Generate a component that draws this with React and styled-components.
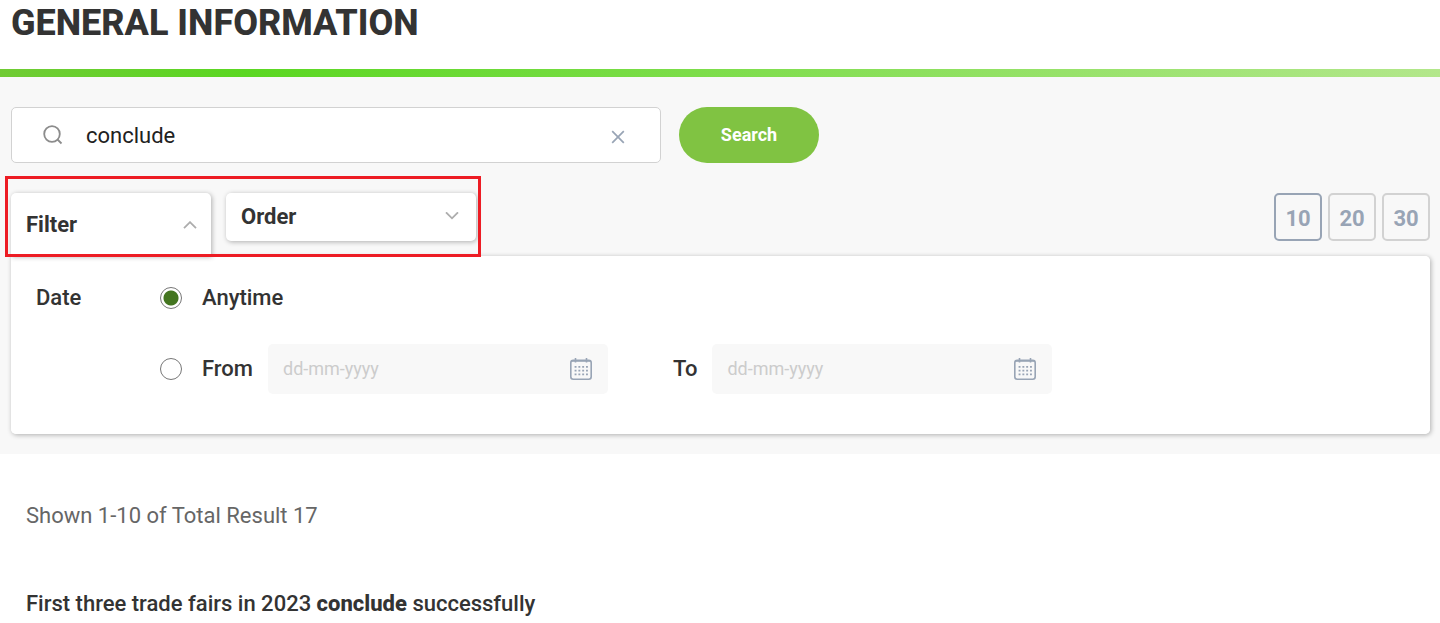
import React, { useState } from 'react';
import styled, { createGlobalStyle, css } from 'styled-components';

const App = () => {
    const [query, setQuery] = useState('conclude');
    const [perPage, setPerPage] = useState(10);
    const [range, setRange] = useState('anytime');

    return (
        <>
            <GlobalStyle />
            <Header>
                <h1>GENERAL INFORMATION</h1>
            </Header>
            <Stripe />
            <SearchArea>
                <SearchForm onSubmit={(e) => e.preventDefault()}>
                    <SearchBox>
                        <SearchIcon />
                        <input
                            type="text"
                            aria-label="Search"
                            value={query}
                            onChange={(e) => setQuery(e.target.value)}
                        />
                        <IconButton type="button" aria-label="Clear" onClick={() => setQuery('')}>
                            <ClearIcon />
                        </IconButton>
                    </SearchBox>
                    <SearchButton type="submit">Search</SearchButton>
                </SearchForm>

                <Toolbar>
                    <Tabs>
                        <Tab type="button" $open aria-expanded="true">
                            Filter
                            <Chevron up />
                        </Tab>
                        <Tab type="button" aria-expanded="false">
                            Order
                            <Chevron />
                        </Tab>
                        <Highlight />
                    </Tabs>
                    <PageSizes>
                        {PAGE_SIZES.map((size) => (
                            <PageSize
                                key={size}
                                type="button"
                                $active={size === perPage}
                                onClick={() => setPerPage(size)}
                            >
                                {size}
                            </PageSize>
                        ))}
                    </PageSizes>
                </Toolbar>

                <FilterPanel>
                    <legend>Date</legend>
                    <Options>
                        <Option>
                            <RadioLabel>
                                <Radio
                                    name="range"
                                    checked={range === 'anytime'}
                                    onChange={() => setRange('anytime')}
                                />
                                Anytime
                            </RadioLabel>
                        </Option>
                        <Option>
                            <RadioLabel>
                                <Radio
                                    name="range"
                                    checked={range === 'dates'}
                                    onChange={() => setRange('dates')}
                                />
                                From
                            </RadioLabel>
                            <DateField label="From date" />
                            <ToLabel htmlFor="date-to">To</ToLabel>
                            <DateField id="date-to" />
                        </Option>
                    </Options>
                </FilterPanel>
            </SearchArea>

            <Results>
                <p>Shown 1-10 of Total Result 17</p>
                <h2>
                    First three trade fairs in 2023 <strong>conclude</strong> successfully
                </h2>
            </Results>
        </>
    );
};

export default App;

const DateField = ({ id, label }) => (
    <DateBox>
        <input id={id} type="text" aria-label={label} placeholder="dd-mm-yyyy" />
        <IconButton type="button" aria-label="Open calendar">
            <CalendarIcon />
        </IconButton>
    </DateBox>
);

const SearchIcon = () => (
    <svg width="20" height="20" viewBox="0 0 20 20" fill="none" stroke="#8c8c8c" strokeWidth="1.8">
        <circle cx="9" cy="9" r="7.8" />
        <path d="M14.5 14.5L18.5 18.5" />
    </svg>
);

const ClearIcon = () => (
    <svg width="14" height="18" viewBox="0 0 14 18" fill="none" stroke="#98a4b5" strokeWidth="1.7">
        <path d="M1.2 5.2L12.8 16.8M12.8 5.2L1.2 16.8" />
    </svg>
);

const Chevron = ({ up }) => (
    <svg width="14" height="8" viewBox="0 0 14 8" fill="none" stroke="#adadad" strokeWidth="1.8">
        <path d={up ? 'M1 7.2L7 1.2L13 7.2' : 'M1 0.3L7 6.3L13 0.3'} />
    </svg>
);

const CalendarIcon = () => (
    <svg width="24" height="24" viewBox="0 0 24 24" fill="none" stroke="#98a4b5" strokeWidth="1.6">
        <rect x="1.8" y="3.2" width="20.4" height="19" rx="2.5" />
        <path d="M2 4H22" />
        <path d="M6.5 1V5.5M17.5 1V5.5" />
        <path d="M5.6 9.8H19M5.6 13.6H19M5.6 17.4H19" strokeWidth="1.8" strokeDasharray="1.9 1.9" />
    </svg>
);

const GlobalStyle = createGlobalStyle`
    * {
        box-sizing: border-box;
    }
    body {
        margin: 0;
        background: #fff;
        color: #333;
        font-family: Roboto, sans-serif;
        font-size: 22px;
        line-height: 26px;
    }
    button, input {
        font-family: inherit;
    }
    h1, h2, p {
        margin: 0;
    }
`

const Header = styled.header`
    padding: 2px 11px 25px;
    h1 {
        font-size: 36px;
        line-height: 42px;
        font-weight: 800;
    }
`

const Stripe = styled.div`
    height: 8px;
    background: linear-gradient(90deg, #70cb34 0%, #5bd722 17%, #b3e78b 100%);
`

const SearchArea = styled.section`
    padding: 30px 10px 20px 11px;
    background: #f8f8f8;
`

const SearchForm = styled.form`
    display: flex;
    gap: 18px;
    margin-bottom: 30px;
`

const IconButton = styled.button`
    display: flex;
    padding: 0;
    border: 0;
    background: none;
    cursor: pointer;
`

const SearchBox = styled.div`
    display: flex;
    align-items: center;
    flex: 0 1 650px;
    height: 56px;
    padding: 0 35px 0 31px;
    border: 1px solid #d2d2d2;
    border-radius: 5px;
    background: #fff;
    input {
        flex: 1;
        min-width: 0;
        padding: 0 23px;
        border: 0;
        outline: 0;
        background: none;
        color: #212121;
        font-size: 22px;
    }
`

const SearchButton = styled.button`
    width: 140px;
    height: 56px;
    padding: 0 0 2px;
    border: 0;
    border-radius: 28px;
    background: #80c342;
    color: #fff;
    font-size: 18px;
    font-weight: 700;
    cursor: pointer;
`

const Toolbar = styled.div`
    display: flex;
    justify-content: space-between;
    align-items: flex-start;
`

const Tabs = styled.div`
    position: relative;
    display: flex;
    align-items: flex-start;
    gap: 15px;
`

const Tab = styled.button`
    display: flex;
    justify-content: space-between;
    align-items: center;
    width: 250px;
    height: 48px;
    padding: 0 17px 2px 15px;
    border: 0;
    border-radius: 5px;
    background: #fff;
    box-shadow: 1px 1px 5px rgba(0, 0, 0, 0.3);
    color: #333;
    font-size: 22px;
    font-weight: 700;
    cursor: pointer;
    ${({ $open }) => $open && css`
        width: 200px;
        height: 63px;
        padding: 0 14px 0 15px;
        border-radius: 5px 5px 0 0;
    `}
`

const Highlight = styled.span`
    position: absolute;
    z-index: 1;
    top: -17px;
    right: -5px;
    bottom: -1px;
    left: -6px;
    border: 3px solid #ed1c24;
    pointer-events: none;
`

const PageSizes = styled.div`
    display: flex;
    gap: 6px;
`

const PageSize = styled.button`
    width: 48px;
    height: 48px;
    padding: 2px 0 0;
    border: 2px solid ${({ $active }) => ($active ? '#98a4b5' : '#d2d2d2')};
    border-radius: 5px;
    background: none;
    color: #98a4b5;
    font-size: 22px;
    font-weight: 700;
    cursor: pointer;
`

const FilterPanel = styled.fieldset`
    display: flex;
    min-width: 0;
    margin: 0;
    padding: 17px 25px 40px;
    border: 0;
    border-radius: 0 5px 5px 5px;
    background: #fff;
    box-shadow: 1px 1px 5px rgba(0, 0, 0, 0.3);
    font-weight: 500;
    legend {
        float: left;
        width: 124px;
        padding: 0;
        line-height: 50px;
    }
`

const Options = styled.div`
    display: flex;
    flex-direction: column;
    flex: 1;
    gap: 21px;
`

const Option = styled.div`
    display: flex;
    align-items: center;
    min-height: 50px;
`

const RadioLabel = styled.label`
    display: flex;
    align-items: center;
    gap: 20px;
    margin-right: 15px;
`

const Radio = styled.input.attrs({ type: 'radio' })`
    appearance: none;
    width: 22px;
    height: 22px;
    margin: 0;
    border: 1px solid #777;
    border-radius: 50%;
    background: #fff;
    &:checked {
        background: radial-gradient(circle, #43751f 7px, #fff 8px);
    }
`

const ToLabel = styled.label`
    margin: 0 15px 0 65px;
`

const DateBox = styled.div`
    display: flex;
    align-items: center;
    flex: 0 1 340px;
    height: 50px;
    padding: 0 15px;
    border-radius: 5px;
    background: #f8f8f8;
    input {
        flex: 1;
        min-width: 0;
        padding: 0 0 2px;
        border: 0;
        outline: 0;
        background: none;
        color: #333;
        font-size: 18px;
        &::placeholder {
            color: #ccc;
        }
    }
`

const Results = styled.main`
    padding: 49px 26px 0;
    p {
        margin-bottom: 62px;
        color: #666;
    }
    h2 {
        font-size: 22px;
        font-weight: 500;
    }
    strong {
        font-weight: 800;
    }
`

const PAGE_SIZES = [10, 20, 30];
